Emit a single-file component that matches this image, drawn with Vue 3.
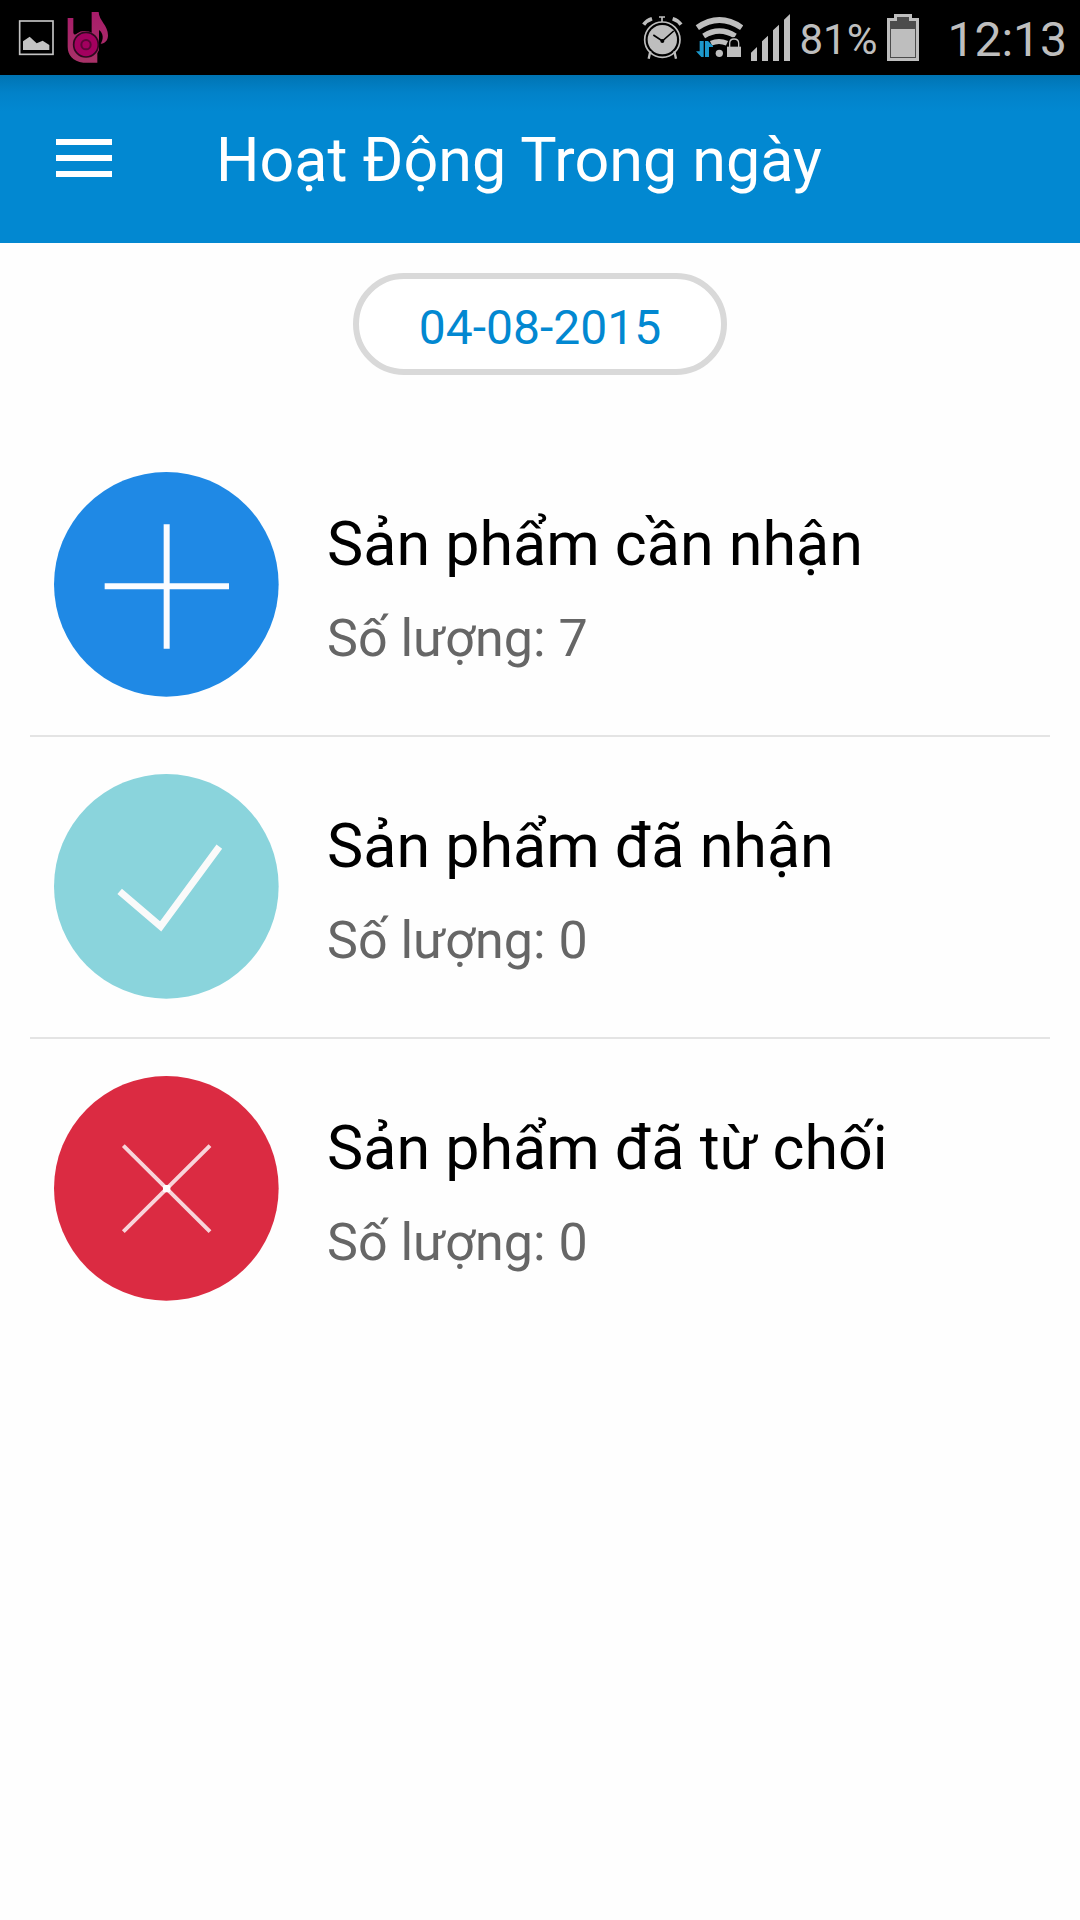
<script setup>
import { ref } from 'vue'

const date = ref('04-08-2015')

const items = [
  { id: 'pending', title: 'Sản phẩm cần nhận', count: 7 },
  { id: 'received', title: 'Sản phẩm đã nhận', count: 0 },
  { id: 'rejected', title: 'Sản phẩm đã từ chối', count: 0 },
]
</script>

<template>
  <div class="screen">
    <div class="status">
      <div class="notifications">
        <svg width="36" height="75" viewBox="54 0 108 225" aria-hidden="true">
          <rect x="59" y="63" width="100" height="100" fill="none" stroke="#c3c3c3" stroke-width="5" />
          <path d="M69 150V124L89 110L110 130L128 122L148 135V150Z" fill="#c3c3c3" />
        </svg>
        <svg width="44" height="75" viewBox="198 0 132 225" aria-hidden="true">
          <defs>
            <linearGradient id="note" x1="0" y1="0" x2="0" y2="1">
              <stop offset="0" stop-color="#a81c6a" />
              <stop offset="1" stop-color="#a83268" />
            </linearGradient>
          </defs>
          <path d="M203 54H220V98Q222 108 232 100Q242 92 256 93Q268 93 275 98V36H296C297 62 324 76 324 106C324 122 314 132 302 131C311 118 311 100 297 90V150L292 160V188H250C218 184 203 164 203 140Z" fill="url(#note)" />
          <circle cx="258" cy="134" r="37" fill="#a3005f" stroke="#2c0a1e" stroke-width="5" />
          <circle cx="258" cy="134" r="14" fill="#a3005f" stroke="#5c0638" stroke-width="6" />
        </svg>
      </div>

      <div class="indicators">
        <svg width="42" height="75" viewBox="36 0 126 225" aria-hidden="true">
          <g fill="none" stroke="#bebebe">
            <circle cx="97" cy="119" r="53" stroke-width="5" />
            <path d="M87 51H105M96 50V66" stroke-width="5" />
            <path d="M41 74Q50 61 66 56M153 74Q144 61 128 56" stroke-width="11" />
            <path d="M61 154L56 176M133 154L138 176" stroke-width="7" />
          </g>
          <circle cx="97" cy="119" r="44" fill="#bebebe" />
          <path d="M70 105L97 123L131 93" fill="none" stroke="#000" stroke-width="5" />
          <circle cx="97" cy="123" r="6" />
        </svg>
        <svg width="51" height="75" viewBox="186 0 153 225" aria-hidden="true">
          <g fill="none" stroke="#bebebe">
            <path d="M202 83Q268 37 335 83" stroke-width="17" />
            <path d="M221 108Q268 78 316 108" stroke-width="16" />
            <path d="M243 130Q267 119 291 130" stroke-width="15" />
          </g>
          <circle cx="268" cy="160" r="11" fill="#bebebe" />
          <path d="M198 154H209V123H221V171H214Z M225 171V123H234L249 138V141H237V171Z" fill="#1c98cc" />
          <path d="M287 138H298V130Q298 111 313 111Q328 111 328 130V138H337V174H287Z" fill="#000" />
          <rect x="291" y="140" width="42" height="31" fill="#bebebe" />
          <path d="M299 141V130Q299 117 312 117Q326 117 326 130V141" fill="none" stroke="#bebebe" stroke-width="4" />
        </svg>
        <svg width="40" height="75" viewBox="363 0 120 225" aria-hidden="true">
          <path d="M363 183V158L381 141V183ZM396 183V124L414 107V183ZM429 183V91L447 74V183ZM462 183V59L480 42V183Z" fill="#bebebe" />
        </svg>
        <span class="level">81%</span>
        <svg width="36" height="75" viewBox="285 0 108 225" aria-hidden="true">
          <path d="M291 54H312V42H366V54H387V183H291Z" fill="#bebebe" />
          <path d="M300 63H321V51H357V63H378V174H300Z" fill="#4c4c4c" />
          <rect x="303" y="87" width="72" height="84" fill="#bebebe" />
        </svg>
        <time class="clock">12:13</time>
      </div>
    </div>

    <header class="bar">
      <button class="menu" type="button" aria-label="Menu">
        <span></span><span></span><span></span>
      </button>
      <h1>Hoạt Động Trong ngày</h1>
    </header>

    <main>
      <button class="date" type="button">{{ date }}</button>

      <ul class="list">
        <li v-for="item in items" :key="item.id" class="item">
          <svg class="badge" viewBox="0 0 675 675" aria-hidden="true">
            <g v-if="item.id === 'pending'">
              <circle cx="337" cy="337" r="337" fill="#1f89e5" />
              <path d="M338 157V530M152 343H525" stroke="#fafcff" stroke-width="18" />
            </g>
            <g v-else-if="item.id === 'received'">
              <circle cx="337" cy="337" r="337" fill="#8ad4dc" />
              <path d="M197 352L320 457L496 218" fill="none" stroke="#fafafa" stroke-width="21" />
            </g>
            <g v-else>
              <circle cx="337" cy="337" r="337" fill="#db2b42" />
              <path d="M208 209L468 467M468 209L208 467" stroke="#f8d4da" stroke-width="12" />
              <rect x="327" y="327" width="22" height="22" rx="5" fill="#fff" />
            </g>
          </svg>
          <div class="text">
            <h2>{{ item.title }}</h2>
            <p>Số lượng: {{ item.count }}</p>
          </div>
        </li>
      </ul>
    </main>
  </div>
</template>

<style>
body {
  margin: 0;
  background: #fefefe;
}
</style>

<style scoped>
.screen {
  min-height: 100vh;
  background: #fefefe;
  font-family: Roboto, "Noto Sans", sans-serif;
}

.screen svg {
  display: block;
  flex: none;
}

.status {
  display: flex;
  justify-content: space-between;
  height: 75px;
  padding: 0 13px 0 18px;
  background: #000;
  color: #bebebe;
}

.notifications {
  display: flex;
  gap: 12px;
}

.indicators {
  display: flex;
  gap: 8px;
}

.level {
  font-size: 42px;
  line-height: 80px;
}

.clock {
  margin-left: 18px;
  font-size: 48px;
  line-height: 80px;
}

.bar {
  display: flex;
  align-items: center;
  height: 168px;
  padding: 0 56px;
  gap: 104px;
  background: linear-gradient(#0074b3, #0282c9 18px, #0288d1 36px);
}

.menu {
  display: flex;
  flex: none;
  flex-direction: column;
  gap: 10px;
  width: 56px;
  padding: 0 0 2px;
  border: 0;
  background: none;
}

.menu span {
  height: 6px;
  background: #fff;
}

h1,
h2 {
  margin: 0;
  font-size: 61px;
  font-weight: 400;
  line-height: 70px;
}

h1 {
  padding-top: 2px;
  color: #fff;
}

.date {
  display: block;
  box-sizing: border-box;
  width: 374px;
  height: 102px;
  margin: 30px auto 60px;
  padding: 8px 0 0;
  border: 6px solid #d9d9d9;
  border-radius: 51px;
  background: #fff;
  color: #0288d1;
  font-family: inherit;
  font-size: 48px;
  line-height: 56px;
}

.list {
  margin: 0 30px;
  padding: 0;
  list-style: none;
}

.item {
  display: flex;
  gap: 48px;
  padding: 37px 24px 38px;
}

.item + .item {
  border-top: 2px solid #e4e4e4;
}

.badge {
  width: 225px;
  height: 225px;
}

.text {
  display: flex;
  flex-direction: column;
  gap: 30px;
  padding-top: 37px;
}

p {
  margin: 0;
  color: #666;
  font-size: 52px;
  line-height: 60px;
}
</style>
